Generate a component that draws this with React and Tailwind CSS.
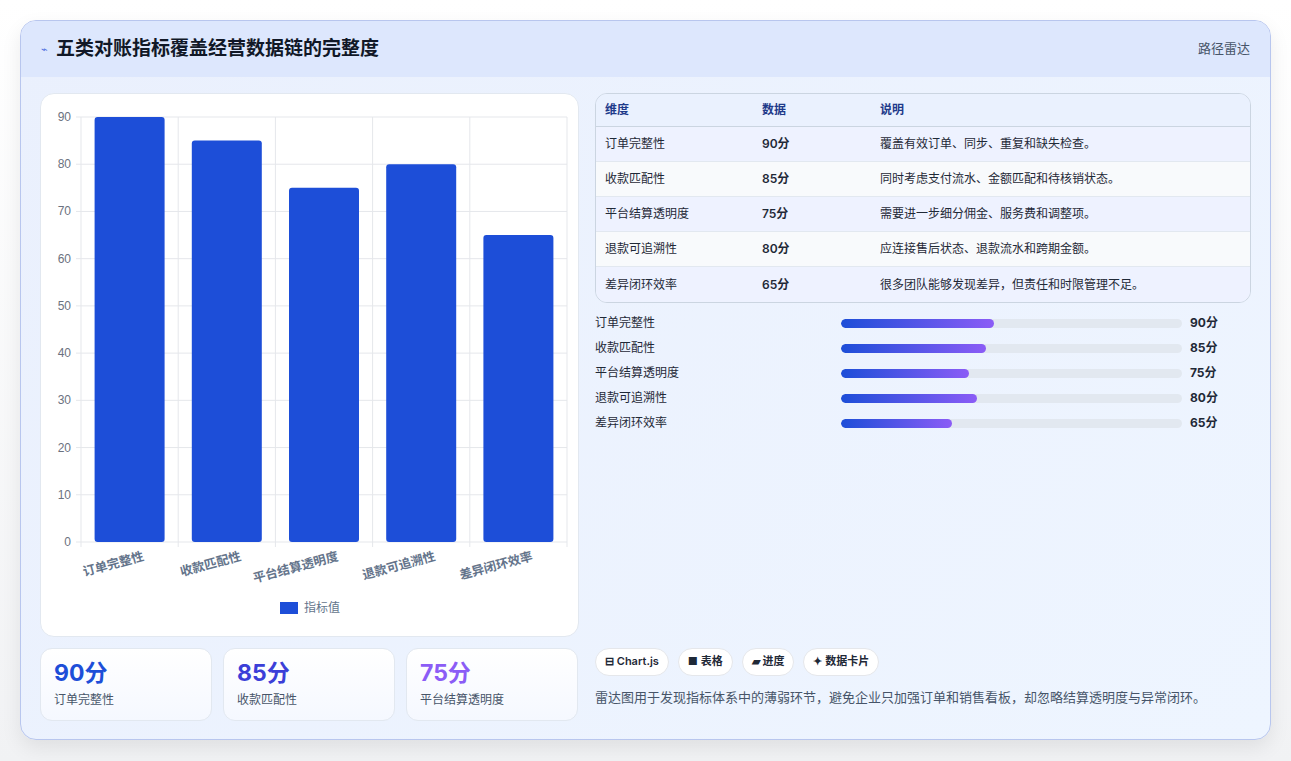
import React from "react";

const data = [
  ["订单完整性", 90, "覆盖有效订单、同步、重复和缺失检查。"],
  ["收款匹配性", 85, "同时考虑支付流水、金额匹配和待核销状态。"],
  ["平台结算透明度", 75, "需要进一步细分佣金、服务费和调整项。"],
  ["退款可追溯性", 80, "应连接售后状态、退款流水和跨期金额。"],
  ["差异闭环效率", 65, "很多团队能够发现差异，但责任和时限管理不足。"],
];

function Chart() {
  const x0 = 40, x1 = 526, y0 = 448, yTop = 23;
  const step = (y0 - yTop) / 9;
  const cw = (x1 - x0) / 5;
  return (
    <svg width="538" height="543" className="block">
      {Array.from({ length: 10 }).map((_, i) => (
        <g key={i}>
          <line x1={x0 - 5} x2={x1} y1={y0 - i * step} y2={y0 - i * step} stroke="#e5e7eb" />
          <text x={30} y={y0 - i * step + 4} textAnchor="end" fontSize="12" fill="#6b7280" fontFamily="Liberation Sans, sans-serif">{i * 10}</text>
        </g>
      ))}
      {Array.from({ length: 6 }).map((_, i) => (
        <line key={i} x1={x0 + i * cw} x2={x0 + i * cw} y1={yTop} y2={y0 + 5} stroke="#e5e7eb" />
      ))}
      {data.map((d, i) => {
        const h = (d[1] / 10) * step;
        const cx = x0 + cw * i + cw / 2;
        return (
          <g key={i}>
            <rect x={cx - 35} y={y0 - h} width="70" height={h} rx="3" fill="#1d4ed8" />
            <text transform={`translate(${cx + 15},${y0 + 18}) rotate(-15)`} textAnchor="end" fontSize="12.5" fontWeight="600" fill="#64748b" fontFamily="Noto Sans CJK SC, sans-serif">{d[0]}</text>
          </g>
        );
      })}
      <rect x="239" y="508" width="18" height="12" fill="#1d4ed8" />
      <text x="263" y="518" fontSize="12" fill="#64748b" fontFamily="Noto Sans CJK SC, sans-serif">指标值</text>
    </svg>
  );
}

export default function App() {
  return (
    <div className="w-[1291px] h-[761px] bg-[linear-gradient(#ffffff,#f1f2f4)] pt-[20px] px-[20px]" style={{ fontFamily: "Inter, 'Noto Sans CJK SC', sans-serif" }}>
      <div className="w-[1251px] h-[720px] rounded-[16px] border border-[#b8c6ee] overflow-hidden bg-[linear-gradient(135deg,#eaf0fd,#eef5ff)] shadow-[0_8px_20px_rgba(0,0,0,0.08)] flex flex-col">
        <div className="h-[56px] shrink-0 bg-[#dde7fd] flex items-center justify-between px-[20px]">
          <div className="flex items-center gap-[8px]">
            <span className="text-[#4f6fe0] text-[11px]">⌁</span>
            <span className="text-[19px] font-bold text-[#111827]">五类对账指标覆盖经营数据链的完整度</span>
          </div>
          <span className="text-[13px] text-[#475569]">路径雷达</span>
        </div>
        <div className="flex gap-[16px] px-[19px] pt-[16px]">
          <div className="w-[539px] flex flex-col gap-[11px]">
            <div className="h-[544px] bg-white rounded-[14px] border border-[#e2e8f0]"><Chart /></div>
            <div className="flex gap-[11px]">
              {[["90分", "订单完整性", "text-[#1d4ed8]"], ["85分", "收款匹配性", "text-[#3b3fd8]"], ["75分", "平台结算透明度", "text-[#8b5cf6]"]].map((s) => (
                <div key={s[1]} className="w-[172px] h-[73px] rounded-[12px] border border-[#e2e8f0] bg-[linear-gradient(#ffffff,#f5f8ff)] px-[13px] pt-[8px]">
                  <div className={`text-[23px] font-bold leading-[32px] ${s[2]}`}>{s[0]}</div>
                  <div className="text-[12px] text-[#475569] mt-[2px]">{s[1]}</div>
                </div>
              ))}
            </div>
          </div>
          <div className="w-[657px] flex flex-col">
            <div className="rounded-[12px] border border-[#cbd5e1] overflow-hidden text-[12px]">
              <div className="flex h-[33px] items-center bg-[#eaf1fe] font-bold text-[#1e3a8a] border-b border-[#cbd5e1]">
                <div className="w-[166px] pl-[9px]">维度</div><div className="w-[118px]">数据</div><div>说明</div>
              </div>
              {data.map((d, i) => (
                <div key={i} className={`flex h-[35px] items-center text-[#1f2937] ${i % 2 ? "bg-[#f8fafc]" : "bg-[#eef2ff]"} ${i < 4 ? "border-b border-[#e2e8f0]" : ""}`}>
                  <div className="w-[166px] pl-[9px]">{d[0]}</div>
                  <div className="w-[118px] font-semibold">{d[1]}分</div>
                  <div>{d[2]}</div>
                </div>
              ))}
            </div>
            <div className="mt-[11px] flex flex-col gap-[7px]">
              {data.map((d, i) => (
                <div key={i} className="flex items-center h-[18px] text-[12px] text-[#1f2937]">
                  <div className="w-[246px]">{d[0]}</div>
                  <div className="w-[341px] h-[9px] rounded-full bg-[#e2e8f0] overflow-hidden">
                    <div className="h-full rounded-full bg-[linear-gradient(90deg,#1d4ed8,#8b5cf6)]" style={{ width: `${d[1] / 2}%` }} />
                  </div>
                  <div className="ml-[8px] font-bold">{d[1]}分</div>
                </div>
              ))}
            </div>
            <div className="mt-auto flex gap-[9px] text-[11px] font-semibold text-[#1f2937]">
              {["⊟ Chart.js", "■ 表格", "▰ 进度", "✦ 数据卡片"].map((t) => (
                <span key={t} className="h-[28px] px-[9px] flex items-center rounded-full bg-white border border-[#e5e7eb]">{t}</span>
              ))}
            </div>
            <div className="mt-[12px] text-[13px] text-[#475569] mb-[14px]">雷达图用于发现指标体系中的薄弱环节，避免企业只加强订单和销售看板，却忽略结算透明度与异常闭环。</div>
          </div>
        </div>
      </div>
    </div>
  );
}
